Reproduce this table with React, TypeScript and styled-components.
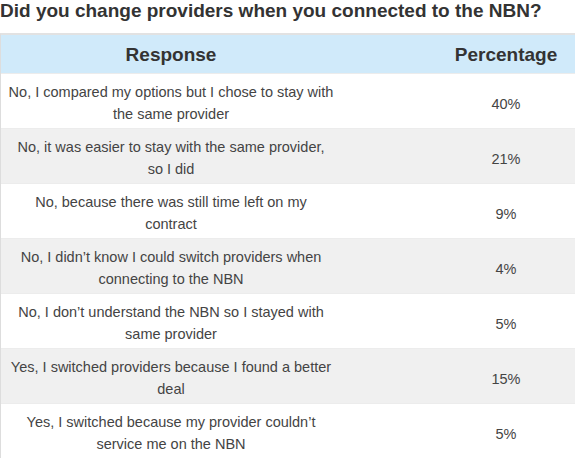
import styled, { createGlobalStyle } from "styled-components";

const GlobalStyle = createGlobalStyle`
  html, body {
    margin: 0;
    padding: 0;
    background: #ffffff;
    overflow: hidden;
  }
  body {
    font-family: "Liberation Sans", Arial, sans-serif;
  }
`;

const Page = styled.div`
  width: 575px;
  height: 458px;
  overflow: hidden;
`;

const Title = styled.h2`
  margin: 0;
  height: 33px;
  font-size: 19px;
  line-height: 22px;
  font-weight: bold;
  color: #333333;
  white-space: nowrap;
`;

const Table = styled.div`
  width: 670px;
  border-top: 2px solid #e2e2e2;
  border-left: 1px solid #dddddd;
`;

const Row = styled.div<{ $shade: "head" | "odd" | "even" }>`
  display: grid;
  grid-template-columns: 340px 330px;
  height: ${(p) => (p.$shade === "head" ? "39px" : "55px")};
  background: ${(p) =>
    p.$shade === "head" ? "#d0eafa" : p.$shade === "even" ? "#f0f0f0" : "#ffffff"};
  border-bottom: 1px solid #ececec;
  box-sizing: border-box;
`;

const HeadCell = styled.div`
  display: flex;
  align-items: center;
  justify-content: center;
  font-size: 19px;
  font-weight: bold;
  color: #333333;
  padding-top: 2px;
`;

const Cell = styled.div<{ $narrow?: boolean }>`
  display: flex;
  align-items: center;
  justify-content: center;
  text-align: center;
  font-size: 14.5px;
  line-height: 22px;
  color: #444444;
  padding: ${(p) => (p.$narrow ? "6px 0 0 0" : "3px 7px 0 7px")};
`;

const rows = [
  ["No, I compared my options but I chose to stay with the same provider", "40%"],
  ["No, it was easier to stay with the same provider, so I did", "21%"],
  ["No, because there was still time left on my contract", "9%"],
  ["No, I didn’t know I could switch providers when connecting to the NBN", "4%"],
  ["No, I don’t understand the NBN so I stayed with same provider", "5%"],
  ["Yes, I switched providers because I found a better deal", "15%"],
  ["Yes, I switched because my provider couldn’t service me on the NBN", "5%"],
];

const App = () => {
  return (
    <Page>
      <GlobalStyle />
      <Title>Did you change providers when you connected to the NBN?</Title>
      <Table>
        <Row $shade="head">
          <HeadCell>Response</HeadCell>
          <HeadCell>Percentage</HeadCell>
        </Row>
        {rows.map(([text, pct], i) => (
          <Row key={i} $shade={i % 2 === 1 ? "even" : "odd"}>
            <Cell>{text}</Cell>
            <Cell $narrow>{pct}</Cell>
          </Row>
        ))}
      </Table>
    </Page>
  );
};

export default App;
